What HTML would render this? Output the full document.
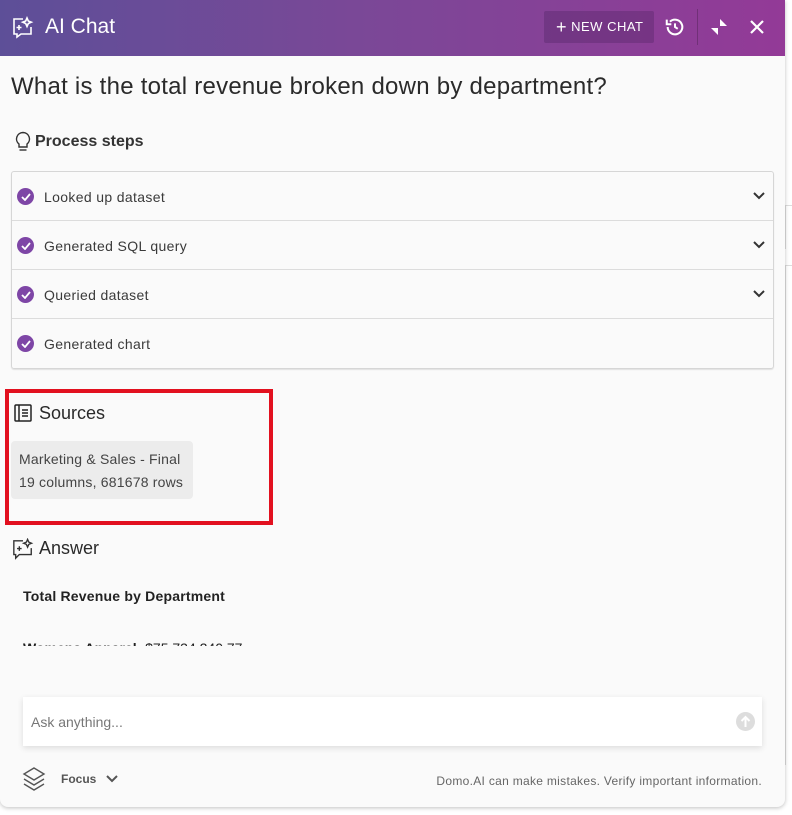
<!DOCTYPE html>
<html><head><style>
*{box-sizing:border-box;margin:0;padding:0}
body{width:792px;height:815px;background:#fff;font-family:"Liberation Sans",sans-serif;position:relative;overflow:hidden;color:#333}
.panel{position:absolute;left:0;top:0;width:785px;height:807px;background:#fafafa;border-radius:0 0 8px 8px;box-shadow:0 1px 4px rgba(0,0,0,.25);overflow:hidden}
.hdr{position:absolute;left:0;top:0;width:785px;height:56px;background:linear-gradient(90deg,#5d4f98 0%,#7a4897 45%,#933a97 100%)}
.abs{position:absolute}
.row{position:absolute;left:12px;width:761px;height:49px;border-top:1px solid #dcdcdc;font-size:14px;color:#3a3a3a;letter-spacing:.35px}
.row .t{position:absolute;left:32px;top:17px}
.row .c{position:absolute;left:5px;top:16px;width:17px;height:17px;border-radius:50%;background:#7e46a6}
</style></head><body>
<div class="abs" style="left:785px;top:205px;width:7px;height:44px;border-left:1px solid #ddd;border-top:1px solid #ddd"></div>
<div class="abs" style="left:785px;top:265px;width:7px;height:500px;border-left:1px solid #ddd;border-top:1px solid #ddd"></div>
<div class="panel">
<div class="hdr">
 <svg class="abs" style="left:11px;top:16px" width="24" height="24" viewBox="0 0 24 24" fill="none" stroke="#fff" stroke-width="1.6"><path d="M12 3H3v15h3v3l4-3h10v-7"/><path d="M16 2l1.3 3 3 1.2-3 1.3L16 10.5l-1.3-3-3-1.3 3-1.2z"/><path d="M8 9v5M5.5 11.5h5"/></svg>
 <div class="abs" style="left:45px;top:15px;color:#fff;font-size:21px">AI Chat</div>
 <div class="abs" style="left:544px;top:11px;width:110px;height:32px;background:rgba(70,30,90,.3);border-radius:2px;color:#fff;font-size:13px;letter-spacing:.5px;line-height:32px;padding-left:12px"><span style="font-size:18px;vertical-align:-2px">+</span>&nbsp;NEW CHAT</div>
 <svg class="abs" style="left:664px;top:16px" width="22" height="22" viewBox="0 0 24 24" fill="none" stroke="#fff" stroke-width="2.2"><path d="M4 12a8 8 0 1 0 2.5-5.8"/><path d="M3 4v5h5" /><path d="M12 8v4l3 2"/></svg>
 <div class="abs" style="left:697px;top:9px;width:1px;height:36px;background:rgba(0,0,0,.2)"></div>
 <svg class="abs" style="left:710px;top:18px" width="18" height="18" viewBox="0 0 18 18" fill="#fff"><path d="M10 1v7h7z"/><path d="M8 17v-7H1z"/></svg>
 <svg class="abs" style="left:748px;top:18px" width="18" height="18" viewBox="0 0 18 18" stroke="#fff" stroke-width="2.2"><path d="M3 3l12 12M15 3L3 15"/></svg>
</div>
<div class="abs" style="left:11px;top:73px;font-size:24px;color:#2a2a2a;font-weight:300;letter-spacing:.25px">What is the total revenue broken down by department?</div>
<svg class="abs" style="left:13px;top:131px" width="20" height="22" viewBox="0 0 20 22" fill="none" stroke="#333" stroke-width="1.4"><path d="M10 1.5a6.5 6.5 0 0 0-4 11.6V16h8v-2.9A6.5 6.5 0 0 0 10 1.5z"/><path d="M6.5 19h7"/></svg>
<div class="abs" style="left:35px;top:133px;font-size:16px;font-weight:bold;color:#333">Process steps</div>
<div class="abs" style="left:11px;top:171px;width:763px;height:198px;border:1px solid #d6d6d6;border-radius:3px;box-shadow:0 1px 1px rgba(0,0,0,.1)"></div>
<div class="row" style="top:172px;border-top:none"><div class="c"></div><svg class="abs" style="left:9px;top:21px" width="10" height="8"><path d="M1 4l3 3 5-6" stroke="#fff" stroke-width="1.8" fill="none"/></svg><div class="t">Looked up dataset</div><svg class="abs" style="left:741px;top:20px" width="12" height="8"><path d="M1 1l5 5 5-5" stroke="#333" stroke-width="2" fill="none"/></svg></div>
<div class="row" style="top:220px"><div class="c"></div><svg class="abs" style="left:9px;top:21px" width="10" height="8"><path d="M1 4l3 3 5-6" stroke="#fff" stroke-width="1.8" fill="none"/></svg><div class="t">Generated SQL query</div><svg class="abs" style="left:741px;top:20px" width="12" height="8"><path d="M1 1l5 5 5-5" stroke="#333" stroke-width="2" fill="none"/></svg></div>
<div class="row" style="top:269px"><div class="c"></div><svg class="abs" style="left:9px;top:21px" width="10" height="8"><path d="M1 4l3 3 5-6" stroke="#fff" stroke-width="1.8" fill="none"/></svg><div class="t">Queried dataset</div><svg class="abs" style="left:741px;top:20px" width="12" height="8"><path d="M1 1l5 5 5-5" stroke="#333" stroke-width="2" fill="none"/></svg></div>
<div class="row" style="top:318px"><div class="c"></div><svg class="abs" style="left:9px;top:21px" width="10" height="8"><path d="M1 4l3 3 5-6" stroke="#fff" stroke-width="1.8" fill="none"/></svg><div class="t">Generated chart</div></div>
<div class="abs" style="left:5px;top:389px;width:268px;height:136px;border:4px solid #e2101f"></div>
<svg class="abs" style="left:14px;top:404px" width="18" height="18" viewBox="0 0 18 18" fill="none" stroke="#222" stroke-width="1.5"><rect x="1" y="1" width="16" height="16" rx="1"/><path d="M5 1v16M8 6h6M8 9h6M8 12h6"/></svg>
<div class="abs" style="left:39px;top:403px;font-size:18px;color:#2a2a2a">Sources</div>
<div class="abs" style="left:11px;top:441px;width:182px;height:58px;background:#ececec;border-radius:4px;font-size:14px;color:#444;line-height:23px;padding:7px 0 0 8px;letter-spacing:.2px">Marketing &amp; Sales - Final<br>19 columns, 681678 rows</div>
<svg class="abs" style="left:12px;top:538px" width="22" height="22" viewBox="0 0 24 24" fill="none" stroke="#333" stroke-width="1.5"><path d="M12 3H2v15h2v4l4-4h13v-7"/><path d="M17 1.5l1.3 3 3 1.2-3 1.3L17 10l-1.3-3-3-1.3 3-1.2z"/><path d="M8 9v5M5.5 11.5h5"/></svg>
<div class="abs" style="left:39px;top:538px;font-size:18px;color:#2a2a2a">Answer</div>
<div class="abs" style="left:23px;top:588px;font-size:14px;font-weight:bold;color:#222;letter-spacing:.2px">Total Revenue by Department</div>
<div class="abs" style="left:23px;top:640px;width:400px;height:6px;overflow:hidden"><div style="font-size:14px;font-weight:bold;color:#222">Womens Apparel: <span style="font-weight:normal">$75,734,240.77</span></div></div>
<div class="abs" style="left:23px;top:697px;width:739px;height:49px;background:#fff;box-shadow:0 2px 6px rgba(0,0,0,.12)">
 <div class="abs" style="left:8px;top:17px;font-size:14px;color:#777">Ask anything...</div>
 <div class="abs" style="left:713px;top:15px;width:19px;height:19px;border-radius:50%;background:#ddd"></div>
 <svg class="abs" style="left:717px;top:18px" width="11" height="13"><path d="M5.5 12V2M1.5 6l4-4 4 4" stroke="#fff" stroke-width="2" fill="none"/></svg>
</div>
<svg class="abs" style="left:21px;top:766px" width="26" height="26" viewBox="0 0 26 26" fill="none" stroke="#555" stroke-width="1.4"><path d="M13 2l10 6-10 6L3 8z"/><path d="M3 13l10 6 10-6"/><path d="M3 18l10 6 10-6"/></svg>
<div class="abs" style="left:61px;top:772px;font-size:12px;color:#555;font-weight:bold">Focus</div>
<svg class="abs" style="left:106px;top:775px" width="12" height="9"><path d="M1 1l5 5 5-5" stroke="#555" stroke-width="2" fill="none"/></svg>
<div class="abs" style="right:23px;top:774px;font-size:12px;color:#666;letter-spacing:.3px">Domo.AI can make mistakes. Verify important information.</div>
</div>
</body></html>
